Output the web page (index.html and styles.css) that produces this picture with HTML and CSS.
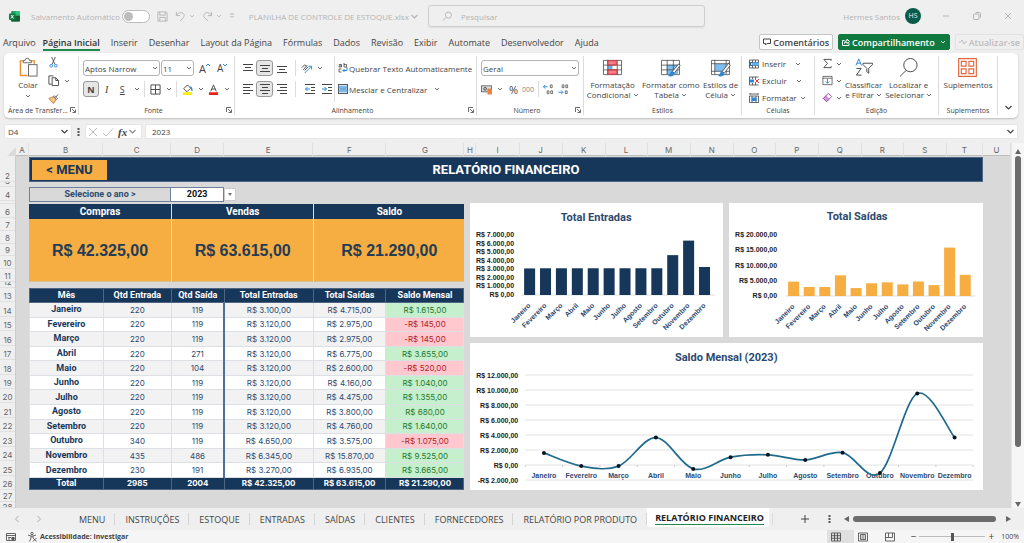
FILE: index.html
```html
<!DOCTYPE html>
<html lang="pt-BR">
<head>
<meta charset="utf-8">
<title>PLANILHA DE CONTROLE DE ESTOQUE.xlsx</title>
<link rel="stylesheet" href="styles.css">
</head>
<body>
<svg class="symbols" aria-hidden="true">
  <symbol id="chev" viewBox="0 0 6 6"><path d="M1 2l2 2 2-2" fill="none" stroke="currentColor" stroke-width=".8"/></symbol>
  <symbol id="launch" viewBox="0 0 6 6"><path d="M.5 5V.5H5M2 2l3 3M5.500 2.500v3h-3" fill="none" stroke="currentColor" stroke-width=".8"/></symbol>
</svg>

<header class="titlebar">
  <div class="title-left">
    <svg class="logo" viewBox="0 0 11 11"><rect x="2" y="0" width="9" height="10.500" rx="1" fill="#21a366"/><path d="M6.500 0H10a1 1 0 0 1 1 1v2.500H6.500z" fill="#33c481"/><path d="M2 5h9v4.500a1 1 0 0 1-1 1H3a1 1 0 0 1-1-1z" fill="#185c37"/><rect y="2.500" width="6.500" height="6.500" rx=".8" fill="#107c41"/><path d="M2 4l2.500 3.500M4.500 4L2 7.500" stroke="#fff" stroke-width=".9"/></svg>
    <label class="autosave">Salvamento Automático <input type="checkbox" class="toggle"></label>
    <button class="tool" aria-label="Salvar"><svg class="i12" viewBox="0 0 12 12"><path d="M1 1h9l1 1v9H1zM3 1v3.500h6V1M3 11V7h6v4" class="line"/></svg></button>
    <button class="tool undo" aria-label="Desfazer"><svg class="i12" viewBox="0 0 12 12"><path d="M1.500 1v4h4M1.700 4.800C3 2.500 5 1.500 7 1.800c3 .5 4 3.500 2 5.700L5.500 11" class="line"/></svg><svg class="chev"><use href="#chev"/></svg></button>
    <button class="tool redo" aria-label="Refazer"><svg class="i12" viewBox="0 0 12 12"><path d="M10.500 1v4h-4M10.300 4.800C9 2.500 7 1.500 5 1.800c-3 .5-4 3.500-2 5.700L6.500 11" class="line"/></svg><svg class="chev"><use href="#chev"/></svg></button>
    <button class="tool" aria-label="Personalizar"><svg class="chev" viewBox="0 0 6 6"><path d="M1 1h4M1.500 3L3 4.500 4.500 3" class="line"/></svg></button>
    <button class="filename">PLANILHA DE CONTROLE DE ESTOQUE.xlsx <svg class="chev big"><use href="#chev"/></svg></button>
  </div>
  <label class="search">
    <svg class="i12" viewBox="0 0 12 12"><circle cx="7" cy="4.500" r="3.300" class="line"/><path d="M4.500 7L1 10.500" class="line"/></svg>
    <input type="search" placeholder="Pesquisar" aria-label="Pesquisar">
  </label>
  <div class="title-right">
    <span>Hermes Santos</span><span class="avatar">HS</span>
    <button class="win" aria-label="Minimizar"><svg class="i8" viewBox="0 0 8 8"><path d="M1 4h6" class="line"/></svg></button>
    <button class="win" aria-label="Restaurar"><svg class="i8" viewBox="0 0 8 8"><rect x=".5" y="2" width="5.500" height="5.500" rx="1" class="line"/><path d="M2.500.5H6.500a1 1 0 0 1 1 1v4" class="line"/></svg></button>
    <button class="win" aria-label="Fechar"><svg class="i8" viewBox="0 0 8 8"><path d="M1 1l6 6M7 1L1 7" class="line"/></svg></button>
  </div>
</header>

<nav class="menubar">
  <button>Arquivo</button><button class="on">Página Inicial</button><button>Inserir</button><button>Desenhar</button><button>Layout da Página</button><button>Fórmulas</button><button>Dados</button><button>Revisão</button><button>Exibir</button><button>Automate</button><button>Desenvolvedor</button><button>Ajuda</button>
  <div class="actions">
    <button class="comments"><svg class="i8" viewBox="0 0 8 8"><path d="M.5 1h7v4.500H4L2.500 7V5.500h-2z" class="line"/></svg>Comentários</button>
    <button class="share"><svg class="i8" viewBox="0 0 8 8"><path d="M2.500 2.500h-2v5h6.500V5M2.500 5.500C2.500 3.500 3.500 2.700 5 2.700V1l2.500 2.500L5 5.500V4c-1.200 0-2 .5-2.500 1.500z" class="line"/></svg>Compartilhamento<svg class="chev"><use href="#chev"/></svg></button>
    <button class="update"><svg class="i8" viewBox="0 0 8 8"><path d="M0 4h1.500L3 2l2 4 1.300-2H8" class="line"/></svg>Atualizar-se</button>
  </div>
</nav>

<section class="ribbon">
  <div class="group clip">
    <div class="body">
      <button class="tall paste"><svg viewBox="0 0 20 20" class="i20"><path d="M5 3H1.500v15.500H9M12 3h4v3" fill="none" stroke="#e8912d" stroke-width="1.500"/><path d="M4.500 2.500h2a2 2 0 0 1 4.500 0h2V5h-8.500z" fill="#fff" stroke="#666"/><rect x="10" y="7" width="9" height="12" fill="#fff" stroke="#666"/></svg>Colar<svg class="chev"><use href="#chev"/></svg></button>
      <div class="stack">
        <button aria-label="Recortar"><svg class="i12" viewBox="0 0 12 12"><path d="M4 0l3.500 8M8 0L4.500 8" stroke="#555" fill="none"/><circle cx="3.500" cy="9.500" r="1.500" fill="none" stroke="#2b88d8"/><circle cx="8.500" cy="9.500" r="1.500" fill="none" stroke="#2b88d8"/></svg></button>
        <button aria-label="Copiar"><svg class="i12" viewBox="0 0 12 12"><path d="M4 10H1V1h5" class="line"/><path d="M4.500 3h4l3 3v5.500h-7zM8.500 3v3h3" class="line"/></svg><svg class="chev"><use href="#chev"/></svg></button>
        <button aria-label="Pincel"><svg class="i12" viewBox="0 0 12 12"><path d="M1 6l5-2 3 3-3 4.500z" fill="#f6c58f" stroke="#d8731a"/><path d="M6 4l3 3 1-1L7 3zM8.500 4.500L11 1.500" stroke="#555" fill="#fff"/></svg></button>
      </div>
    </div>
    <div class="cap"><span>Área de Transfer...</span><svg class="launch"><use href="#launch"/></svg></div>
  </div>

  <div class="group">
    <div class="body rows">
      <div class="row">
        <label class="pick font"><select aria-label="Fonte"><option>Aptos Narrow</option></select><svg class="chev"><use href="#chev"/></svg></label>
        <label class="pick size"><select aria-label="Tamanho"><option>11</option></select><svg class="chev"><use href="#chev"/></svg></label>
        <button class="grow" aria-label="Aumentar fonte">A<svg class="i4" viewBox="0 0 4 4"><path d="M0 3l2-2 2 2" stroke="#2b88d8" fill="none"/></svg></button>
        <button class="grow less" aria-label="Diminuir fonte">A<svg class="i4" viewBox="0 0 4 4"><path d="M0 1l2 2 2-2" stroke="#2b88d8" fill="none"/></svg></button>
      </div>
      <div class="row">
        <button class="sq on bold">N</button><button class="sq serif"><i>I</i></button><button class="sq"><u>S</u></button><svg class="chev"><use href="#chev"/></svg>
        <span class="bar"></span>
        <button class="drop" aria-label="Bordas"><svg class="i12" viewBox="0 0 12 12"><path d="M1 1h10v10H1zM6 1v10M1 6h10" class="line"/></svg><svg class="chev"><use href="#chev"/></svg></button>
        <span class="bar"></span>
        <button class="drop" aria-label="Cor de preenchimento"><svg class="i12" viewBox="0 0 12 12"><rect x="1" y="9" width="10" height="3" fill="#ffee00"/><path d="M2 5l4-4 3.500 3.500L6 8H4.500z" class="line"/><path d="M9 3c2 1 2 2 1.800 4.500" stroke="#2b88d8" stroke-width="1.500" fill="none"/></svg><svg class="chev"><use href="#chev"/></svg></button>
        <button class="drop" aria-label="Cor da fonte"><svg class="i12" viewBox="0 0 12 12"><rect x="1" y="9" width="10" height="3" fill="#e3221b"/><path d="M3 8l3-7 3 7M4 5.500h4" class="line"/></svg><svg class="chev"><use href="#chev"/></svg></button>
      </div>
    </div>
    <div class="cap"><span>Fonte</span><svg class="launch"><use href="#launch"/></svg></div>
  </div>

  <div class="group">
    <div class="body align">
      <div class="rows">
        <div class="row">
          <button class="sq" aria-label="Alinhar em cima"><svg class="i10" viewBox="0 0 10 10"><path d="M0 1.500h10M2 4.500h6M0 7.500h10" class="line"/></svg></button><button class="sq on" aria-label="Alinhar no meio"><svg class="i10" viewBox="0 0 10 10"><path d="M0 2.500h10M2 5.500h6M0 8.500h10" class="line"/></svg></button><button class="sq" aria-label="Alinhar embaixo"><svg class="i10" viewBox="0 0 10 10"><path d="M0 3.500h10M2 6.500h6M0 9.500h10" class="line"/></svg></button>
          <span class="bar"></span>
          <button class="drop" aria-label="Orientação"><svg class="i12" viewBox="0 0 12 12"><path d="M1 5l3-3 2 2M2.500 7.500l4-5M4 8l4-4" class="line"/><path d="M4 11l7-7M8 3.500h3.500V7" stroke="#2b88d8" fill="none"/></svg><svg class="chev"><use href="#chev"/></svg></button>
        </div>
        <div class="row">
          <button class="sq" aria-label="Esquerda"><svg class="i10" viewBox="0 0 10 10"><path d="M0 .5h10M0 3.500h7M0 6.500h10M0 9.500h7" class="line"/></svg></button><button class="sq on" aria-label="Centro"><svg class="i10" viewBox="0 0 10 10"><path d="M0 .5h10M2 3.500h6M0 6.500h10M2 9.500h6" class="line"/></svg></button><button class="sq" aria-label="Direita"><svg class="i10" viewBox="0 0 10 10"><path d="M0 .5h10M3 3.500h7M0 6.500h10M3 9.500h7" class="line"/></svg></button>
          <span class="bar"></span>
          <button class="sq" aria-label="Diminuir recuo"><svg class="i10" viewBox="0 0 10 10"><path d="M0 .5h10M6 3.500h4M6 6.500h4M0 9.500h10" class="line"/><path d="M5 5H.5M2.500 3l-2 2 2 2" stroke="#2b88d8" fill="none"/></svg></button><button class="sq" aria-label="Aumentar recuo"><svg class="i10" viewBox="0 0 10 10"><path d="M0 .5h10M6 3.500h4M6 6.500h4M0 9.500h10" class="line"/><path d="M0 5h4.500M2.500 3l2 2-2 2" stroke="#2b88d8" fill="none"/></svg></button>
        </div>
      </div>
      <span class="bar tallbar"></span>
      <div class="rows wrap">
        <div class="row"><button class="text"><svg class="i10" viewBox="0 0 10 10"><path d="M1 1.500h2.500V4H1V2.800h2.500M6 0v4h2.500V1.500H6M3.500 6H1v3h2.500" class="line thin"/><path d="M9 4v3.500H5M6.500 6L5 7.500 6.500 9" stroke="#2b88d8" fill="none"/></svg>Quebrar Texto Automaticamente</button></div>
        <div class="row"><button class="text"><svg class="i10" viewBox="0 0 10 10"><rect x=".5" y=".5" width="9" height="9" fill="#cfe6f8" stroke="#555"/><path d="M0 3h10M0 7h10" stroke="#2b88d8"/><path d="M1.500 5h7" stroke="#1d6fb8"/></svg>Mesclar e Centralizar<svg class="chev far"><use href="#chev"/></svg></button></div>
      </div>
    </div>
    <div class="cap"><span>Alinhamento</span><svg class="launch"><use href="#launch"/></svg></div>
  </div>

  <div class="group">
    <div class="body rows">
      <div class="row"><label class="pick general"><select aria-label="Formato de número"><option>Geral</option></select><svg class="chev"><use href="#chev"/></svg></label></div>
      <div class="row num">
        <button class="drop" aria-label="Moeda"><svg class="i12" viewBox="0 0 12 12"><rect x=".5" y="2" width="11" height="6.500" fill="#ddd" stroke="#666"/><circle cx="4.500" cy="5.300" r="1.500" class="line"/><rect x="7" y="5" width="5" height="6.500" rx="1" fill="#e8853b"/></svg><svg class="chev"><use href="#chev"/></svg></button>
        <button class="pct">%</button><button class="zeros">000</button><span class="bar"></span>
        <button class="dec" aria-label="Aumentar casas"><svg class="i12" viewBox="0 0 12 12"><path d="M5 3H.5M2.500 1l-2 2 2 2" stroke="#2b88d8" fill="none"/><path d="M8 1h2v3H8zM4.500 7.500h2v3h-2zM8.500 7.500h2v3h-2z" class="line thin"/></svg></button>
        <button class="dec" aria-label="Diminuir casas"><svg class="i12" viewBox="0 0 12 12"><path d="M.5 9H5M3.500 7l2 2-2 2" stroke="#2b88d8" fill="none"/><path d="M4.500 1h2v3h-2zM8.500 1h2v3h-2zM8 7.500h2v3H8z" class="line thin"/></svg></button>
      </div>
    </div>
    <div class="cap"><span>Número</span><svg class="launch"><use href="#launch"/></svg></div>
  </div>

  <div class="group">
    <div class="body big-buttons">
      <button class="tall"><svg class="i20" viewBox="0 0 20 20"><rect x="5" y="3" width="9" height="4.500" fill="#ff8087"/><rect x="5" y="7.500" width="5" height="4.500" fill="#68b1ee"/><rect x="5" y="12" width="10" height="5" fill="#ff8087"/><path d="M.5 2.500h19v15H.5zM5 2v15.500M15 2v15.500M.5 7.500h19M.5 12.500h19" class="line thin"/><path d="M5 3h9v4.500H5zM5 12.500h10V17H5z" stroke="#e0323c" fill="none"/></svg><span>Formatação<br>Condicional <svg class="chev"><use href="#chev"/></svg></span></button>
      <button class="tall"><svg class="i20" viewBox="0 0 20 20"><rect x="6" y="7" width="12" height="10" fill="#7fbdf0"/><path d="M.5 2.500h19v15H.5zM6.500 2v15.500M13 2v15.500M.5 7.500h19M.5 12.500h19" class="line thin"/><path d="M19 6l-7 8 2 2 6-8z" fill="#fff" stroke="#555"/><path d="M12 14c-3 0-2 4-5 5 4 1 7 0 7-3z" fill="#2b88d8"/></svg><span>Formatar como<br>Tabela <svg class="chev"><use href="#chev"/></svg></span></button>
      <button class="tall"><svg class="i20" viewBox="0 0 20 20"><rect x="4" y="6" width="12" height="8" fill="#7fbdf0"/><path d="M.5 2.500h19v15H.5zM4 2v15.500M16 2v15.500M.5 6h19M.5 14h19" class="line thin"/><path d="M19 5l-7 9 2 2 6-8z" fill="#fff" stroke="#555"/><path d="M12 14c-3 0-2 4-5 5 4 1 7 0 7-3z" fill="#2b88d8"/></svg><span>Estilos de<br>Célula <svg class="chev"><use href="#chev"/></svg></span></button>
    </div>
    <div class="cap"><span>Estilos</span></div>
  </div>

  <div class="group">
    <div class="body cells">
      <button class="text"><svg class="i10" viewBox="0 0 10 10"><path d="M.5 1h9v8h-9zM3.500 1v8M6.500 1v8M0 3.500h10M0 6.500h10" class="line thin"/><path d="M3 3.500h7v3H3z" fill="#68b1ee"/><path d="M3.500 3L1 5l2.500 2" stroke="#1d6fb8" fill="none"/></svg>Inserir<svg class="chev far"><use href="#chev"/></svg></button>
      <button class="text"><svg class="i10" viewBox="0 0 10 10"><path d="M.5 1h9M.5 9h9M3.500 1v2M6.500 1v2M3.500 7v2M6.500 7v2M.5 1v8" class="line thin"/><path d="M1 3.500h4v3H1z" fill="#2b88d8"/><path d="M6 3l4 4M10 3L6 7" stroke="#e0323c" fill="none"/></svg>Excluir<svg class="chev far"><use href="#chev"/></svg></button>
      <button class="text"><svg class="i10" viewBox="0 0 10 10"><path d="M.5 3h9v6.500h-9zM3 3v6.500M7 3v6.500M1 1h8M1 0v2M9 0v2" class="line thin"/><path d="M2.500 4.500h5v3.500h-5z" fill="#2b88d8"/></svg>Formatar<svg class="chev"><use href="#chev"/></svg></button>
    </div>
    <div class="cap"><span>Células</span></div>
  </div>

  <div class="group">
    <div class="body edit">
      <div class="cells">
        <button class="text" aria-label="Soma"><svg class="i12" viewBox="0 0 12 12"><path d="M10 3V1.500H2l4 4.500-4 4.500h8V9" class="line"/></svg><svg class="chev"><use href="#chev"/></svg></button>
        <button class="text" aria-label="Preencher"><svg class="i12" viewBox="0 0 12 12"><path d="M1 1.500h10v9H1zM1 3.500h10" class="line thin"/><path d="M6 4v5M4 7l2 2 2-2" stroke="#2b88d8" fill="none"/></svg><svg class="chev"><use href="#chev"/></svg></button>
        <button class="text" aria-label="Limpar"><svg class="i12" viewBox="0 0 12 12"><path d="M1.500 7L7 1.500l3.500 3.500L5 10.500z" fill="#fff" stroke="#a33bb5"/><path d="M1.500 7L4 4.500 7.500 8 5 10.500z" fill="#d9a0e0" stroke="#a33bb5"/></svg><svg class="chev"><use href="#chev"/></svg></button>
      </div>
      <button class="tall"><svg class="i20" viewBox="0 0 20 20"><path d="M2 8l3-7 3 7M3 5.500h4" fill="none" stroke="#2b88d8"/><path d="M2.500 11h5l-5 7h5.500M9.500 5.500h10v1.500l-4 4v5l-2-1.500V11l-4-4z" class="line"/></svg><span>Classificar<br>e Filtrar <svg class="chev"><use href="#chev"/></svg></span></button>
      <button class="tall"><svg class="i20" viewBox="0 0 20 20"><circle cx="12" cy="7.500" r="7" class="line"/><path d="M7.500 13L1 19.500" class="line"/></svg><span>Localizar e<br>Selecionar <svg class="chev"><use href="#chev"/></svg></span></button>
    </div>
    <div class="cap"><span>Edição</span></div>
  </div>

  <div class="group">
    <div class="body big-buttons">
      <button class="tall"><svg class="i20" viewBox="0 0 20 20"><path d="M.7.7h18.600v18.600H.7zM3.500 3.500h5v5h-5zM11.500 3.500h5v5h-5zM3.500 11.500h5v5h-5zM11.500 11.500h5v5h-5z" fill="none" stroke="#e2673f" stroke-width="1.200"/></svg><span>Suplementos</span></button>
    </div>
    <div class="cap"><span>Suplementos</span></div>
  </div>
  <button class="collapse" aria-label="Recolher"><svg class="chev big"><use href="#chev"/></svg></button>
</section>

<section class="formula">
  <label class="box name"><input type="text" value="D4" aria-label="Caixa de nome"><svg class="chev big"><use href="#chev"/></svg></label>
  <svg class="dots" viewBox="0 0 3 8"><path d="M.5 0h2v2h-2zM.5 3h2v2h-2zM.5 6h2v2h-2z" fill="#555"/></svg>
  <div class="box fx"><svg class="i10" viewBox="0 0 10 10"><path d="M1 1l8 8M9 1L1 9" stroke="#bbb" fill="none"/></svg><svg class="i10" viewBox="0 0 10 10"><path d="M0 6l3 3 7-7.500" stroke="#bbb" fill="none"/></svg><i>fx</i><svg class="chev big"><use href="#chev"/></svg></div>
  <label class="box value"><input type="text" value="2023" aria-label="Barra de fórmulas"><svg class="chev big"><use href="#chev"/></svg></label>
</section>

<main class="workbook">
  <div class="corner"><svg viewBox="0 0 9 9"><path d="M9 0v9H0z" fill="#dadada"/></svg></div>
  <div class="colhead"><span>A</span><span>B</span><span>C</span><span>D</span><span>E</span><span>F</span><span>G</span><span>H</span><span>I</span><span>J</span><span>K</span><span>L</span><span>M</span><span>N</span><span>O</span><span>P</span><span>Q</span><span>R</span><span>S</span><span>T</span><span>U</span></div>
  <div class="vscroll"><svg viewBox="0 0 6 5"><path d="M0 5l3-5 3 5z" fill="#666"/></svg><span class="thumb"></span><span class="rest"></span><svg viewBox="0 0 6 5"><path d="M0 0l3 5 3-5z" fill="#666"/></svg></div>
  <div class="rowhead"><span>2</span><span>3</span><span>4</span><span></span><span>6</span><span>7</span><span>8</span><span>9</span><span>10</span><span>11</span><span>12</span><span>13</span><span>14</span><span>15</span><span>16</span><span>17</span><span>18</span><span>19</span><span>20</span><span>21</span><span>22</span><span>23</span><span>24</span><span>25</span><span>26</span><span>27</span><span class="last">28</span></div>

  <div class="canvas">
    <div class="banner"><button>&lt; MENU</button><h1>RELATÓRIO FINANCEIRO</h1><span></span></div>
    <div class="year"><span class="ask">Selecione o ano &gt;</span><span class="cell">2023</span><button aria-label="Escolher ano"><svg viewBox="0 0 4 3"><path d="M0 0h4L2 3z" fill="#777"/></svg></button></div>
    <div class="cards">
      <section><h2>Compras</h2><p>R$ 42.325,00</p></section>
      <section><h2>Vendas</h2><p>R$ 63.615,00</p></section>
      <section><h2>Saldo</h2><p>R$ 21.290,00</p></section>
    </div>
    <div class="tablebox">
    <table>
      <colgroup><col class="c1"><col class="c2"><col class="c3"><col class="c4"><col class="c5"><col class="c6"></colgroup>
      <thead><tr><th>Mês</th><th>Qtd Entrada</th><th>Qtd Saída</th><th>Total Entradas</th><th>Total Saídas</th><th>Saldo Mensal</th></tr></thead>
      <tbody>
        <tr><th>Janeiro</th><td>220</td><td>119</td><td>R$ 3.100,00</td><td>R$ 4.715,00</td><td class="up">R$ 1.615,00</td></tr>
        <tr><th>Fevereiro</th><td>220</td><td>119</td><td>R$ 3.120,00</td><td>R$ 2.975,00</td><td class="down">-R$ 145,00</td></tr>
        <tr><th>Março</th><td>220</td><td>119</td><td>R$ 3.120,00</td><td>R$ 2.975,00</td><td class="down">-R$ 145,00</td></tr>
        <tr><th>Abril</th><td>220</td><td>271</td><td>R$ 3.120,00</td><td>R$ 6.775,00</td><td class="up">R$ 3.655,00</td></tr>
        <tr><th>Maio</th><td>220</td><td>104</td><td>R$ 3.120,00</td><td>R$ 2.600,00</td><td class="down">-R$ 520,00</td></tr>
        <tr><th>Junho</th><td>220</td><td>119</td><td>R$ 3.120,00</td><td>R$ 4.160,00</td><td class="up">R$ 1.040,00</td></tr>
        <tr><th>Julho</th><td>220</td><td>119</td><td>R$ 3.120,00</td><td>R$ 4.475,00</td><td class="up">R$ 1.355,00</td></tr>
        <tr><th>Agosto</th><td>220</td><td>119</td><td>R$ 3.120,00</td><td>R$ 3.800,00</td><td class="up">R$ 680,00</td></tr>
        <tr><th>Setembro</th><td>220</td><td>119</td><td>R$ 3.120,00</td><td>R$ 4.760,00</td><td class="up">R$ 1.640,00</td></tr>
        <tr><th>Outubro</th><td>340</td><td>119</td><td>R$ 4.650,00</td><td>R$ 3.575,00</td><td class="down">-R$ 1.075,00</td></tr>
        <tr><th>Novembro</th><td>435</td><td>486</td><td>R$ 6.345,00</td><td>R$ 15.870,00</td><td class="up">R$ 9.525,00</td></tr>
        <tr><th>Dezembro</th><td>230</td><td>191</td><td>R$ 3.270,00</td><td>R$ 6.935,00</td><td class="up">R$ 3.665,00</td></tr>
      </tbody>
      <tfoot><tr><th>Total</th><td>2985</td><td>2004</td><td>R$ 42.325,00</td><td>R$ 63.615,00</td><td>R$ 21.290,00</td></tr></tfoot>
    </table>
    </div>
    <div class="charts">
      <figure class="chart in"><svg id="entradas" viewBox="0 0 252 134"></svg></figure>
      <figure class="chart out"><svg id="saidas" viewBox="0 0 254 134"></svg></figure>
      <figure class="chart wide"><svg id="saldo" viewBox="0 0 512 147"></svg></figure>
    </div>
  </div>
</main>

<nav class="sheets">
  <button class="nav" aria-label="Anterior"><svg class="i8" viewBox="0 0 8 8"><path d="M5.500 1l-3 3 3 3" class="line"/></svg></button>
  <button class="nav" aria-label="Próxima"><svg class="i8" viewBox="0 0 8 8"><path d="M2.500 1l3 3-3 3" class="line"/></svg></button>
  <button class="tab first">MENU</button><button class="tab">INSTRUÇÕES</button><button class="tab">ESTOQUE</button><button class="tab">ENTRADAS</button><button class="tab">SAÍDAS</button><button class="tab">CLIENTES</button><button class="tab">FORNECEDORES</button><button class="tab long">RELATÓRIO POR PRODUTO</button><button class="tab active"><span>RELATÓRIO FINANCEIRO</span></button>
  <span class="bar"></span>
  <div class="hscroll">
    <button class="nav" aria-label="Nova planilha"><svg class="i8" viewBox="0 0 8 8"><path d="M4 0v8M0 4h8" stroke="#444"/></svg></button>
    <svg class="dots" viewBox="0 0 3 8"><path d="M.5 0h2v2h-2zM.5 3h2v2h-2zM.5 6h2v2h-2z" fill="#555"/></svg>
    <svg class="tri" viewBox="0 0 5 6"><path d="M5 0v6L0 3z" fill="#666"/></svg><span class="thumb"></span><svg class="tri" viewBox="0 0 5 6"><path d="M0 0v6l5-3z" fill="#666"/></svg>
  </div>
</nav>

<footer class="status">
  <svg class="i10" viewBox="0 0 10 10"><path d="M.5 1.500h9v7h-9zM0 3.500h10M2 5.500h3M2 7h2" class="line thin"/><circle cx="7" cy="6.500" r="1.800" fill="#555"/></svg>
  <svg class="i10" viewBox="0 0 10 10"><circle cx="5" cy="1.500" r="1.200" class="line thin"/><path d="M1 3l3 1v2L2.500 9.500M9 3L6 4v2M4 4h2" class="line thin"/><path d="M6 6l3.500 3.500M9.500 6L6 9.500" class="line thin"/></svg>
  <b>Acessibilidade: investigar</b>
  <div class="views">
    <button class="on" aria-label="Normal"><svg class="i10" viewBox="0 0 10 10"><path d="M.5 1h9v8h-9zM3.500 1v8M6.500 1v8M0 3.700h10M0 6.300h10" class="line thin"/></svg></button>
    <button aria-label="Layout da Página"><svg class="i10" viewBox="0 0 10 10"><path d="M.5 1h9v8h-9zM2.500 2.500h5v5h-5zM3.500 4h3M3.500 6h3" class="line thin"/></svg></button>
    <button aria-label="Quebra de Página"><svg class="i10" viewBox="0 0 10 10"><path d="M.5 1h9v8h-9zM3.500 1v4.500h4V1M.5 5.500h3" class="line thin"/></svg></button>
  </div>
  <span class="sign">−</span><input type="range" min="0" max="200" value="100" aria-label="Zoom"><span class="sign">+</span><span class="zoom">100%</span>
</footer>
<script src="charts.js"></script>
</body>
</html>
```
FILE: styles.css
```css
* { box-sizing: border-box; }
body {
  margin: 0; height: 100vh; display: flex; flex-direction: column; overflow: hidden;
  background: #efefef; color: #444; font: 8px/11px "Open Sans", "Noto Sans", sans-serif;
}
button, input, select { font: inherit; color: inherit; background: none; border: 0; padding: 0; margin: 0; outline: 0; }
button { display: flex; align-items: center; white-space: nowrap; }
svg { flex: none; display: block; overflow: visible; }
.symbols { width: 0; height: 0; position: absolute; }
.line { fill: none; stroke: currentColor; }
.thin { stroke-width: .8; }
.chev { width: 6px; height: 6px; }
.chev.big { width: 9px; height: 9px; }
.i4 { width: 4px; height: 4px; }
.i8 { width: 8px; height: 8px; }
.i10 { width: 10px; height: 10px; }
.i12 { width: 11px; height: 11px; }
.i20 { width: 19px; height: 19px; }
.dots { width: 3px; height: 8px; }
.bar { width: 1px; height: 16px; background: #dcdcdc; }

.titlebar { display: grid; grid-template-columns: 428fr 277fr 319fr; height: 32px; align-items: center; color: #b4b4b4; flex: none; }
.title-left { display: flex; align-items: center; padding-left: 9px; gap: 7px; }
.logo { width: 11px; height: 11px; margin-right: 4px; }
.autosave { display: flex; align-items: center; gap: 2px; white-space: nowrap; }
.toggle { appearance: none; width: 28px; height: 13px; border: 1px solid #bbb; border-radius: 7px; background: #fff; padding: 0 1px; display: flex; align-items: center; }
.toggle::before { content: ""; width: 9px; height: 9px; border-radius: 5px; background: #bdbdbd; }
.tool { gap: 3px; }
.filename { margin-left: 7px; gap: 1px; }
.search { display: flex; align-items: center; height: 22px; border: 1px solid #cfcfcf; border-radius: 3px; padding-left: 13px; gap: 8px; box-shadow: 0 1px 1px #ddd; }
.search input { flex: 1; min-width: 0; }
.search input::placeholder { color: #b4b4b4; opacity: 1; }
.title-right { display: flex; align-items: center; justify-content: flex-end; padding-right: 10px; gap: 5px; }
.avatar { width: 16px; height: 16px; border-radius: 8px; background: #0b5a4b; color: #e8f3ef; font-size: 7px; line-height: 16px; text-align: center; }
.win { margin-left: 14px; width: 12px; justify-content: center; }

.menubar { display: flex; gap: 11px; padding-left: 3px; height: 20px; flex: none; font-size: 9px; align-items: center; }
.menubar > button { height: 18px; border-bottom: 2px solid transparent; padding-top: 3px; }
.menubar > .on { font-weight: 600; border-color: #1f8a50; color: #333; }
.menubar > button:first-child { margin-right: -4px; }
.actions { display: flex; margin-left: auto; gap: 5px; }
.actions button { height: 16px; border-radius: 2px; gap: 2px; padding: 0 3px; font-weight: 600; border: 1px solid #c4c4c4; background: #fff; }
.actions .share { background: #10793f; border-color: #10793f; color: #fff; }
.actions .share .chev { margin-left: 3px; }
.actions .update { background: none; border-color: #e2e2e2; color: #bdbdbd; }

.ribbon { display: grid; grid-template-columns: 75fr 156fr 242fr 107fr 158fr 73fr 124fr 59fr 20fr; height: 65px; margin: 1px 6px 0 4px; background: #fff; border-radius: 5px; box-shadow: 0 1px 2px #bbb; flex: none; padding: 3px 0; }
.group { display: flex; flex-direction: column; border-right: 1px solid #dcdcdc; min-width: 0; }
.body { flex: 1; display: flex; min-height: 0; padding: 0 4px; }
.cap { display: flex; align-items: center; height: 10px; font-size: 7px; line-height: 9px; padding: 0 2px; white-space: nowrap; }
.cap span { flex: 1; text-align: center; }
.launch { width: 6px; height: 6px; }
.rows { display: flex; flex-direction: column; gap: 5px; padding-top: 4px; }
.row { display: flex; align-items: center; height: 16px; gap: 4px; }
.tall { flex-direction: column; align-items: center; line-height: 10px; gap: 3px; text-align: center; }
.tall .chev { display: inline-block; }
.paste { width: 40px; padding: 2px 0 0; gap: 3px; }
.stack { display: flex; flex-direction: column; gap: 7px; padding: 1px 0 0; }
.stack button { gap: 5px; height: 11px; }
.pick { display: flex; align-items: center; height: 16px; border: 1px solid #b5b5b5; border-radius: 3px; padding-right: 1px; }
.pick select { appearance: none; flex: 1; min-width: 0; padding-left: 1px; }
.font { width: 77px; } .size { width: 33px; margin-left: -3px; } .general { flex: 1; }
.grow { font-size: 11px; align-items: flex-start; margin-left: 1px; }
.less { font-size: 10px; margin-left: 3px; }
.sq { width: 17px; height: 16px; justify-content: center; border-radius: 3px; border: 1px solid transparent; font-size: 9px; margin-right: -4px; }
.sq + .chev { margin-left: 4px; }
.sq + .bar { margin-left: 5px; }
.sq.on { background: #e6e6e6; border-color: #9a9a9a; }
.sq.bold { font-weight: 700; }
.serif { font-family: "Liberation Serif", serif; font-size: 10px; }
.row .bar { margin-right: 1px; }
.drop { gap: 5px; }
.align { gap: 3px; padding-right: 0; }
.tallbar { height: 46px; }
.text { gap: 3px; }
.wrap .text { gap: 1px; }
.far { margin-left: 6px; }
.num { gap: 4px; }
.num .bar { margin: 0; }
.pct { font-size: 11px; margin-left: 2px; } .zeros { font-size: 7px; color: #888; }
.big-buttons { justify-content: space-around; padding: 2px 1px; }
.cells { display: flex; flex-direction: column; gap: 6px; padding: 2px 7px; }
.cells button { height: 11px; }
.edit { padding: 0; justify-content: space-between; }
.edit .cells { padding-right: 0; }
.edit .tall { padding-top: 2px; }
.edit .tall:last-child { padding-right: 6px; }
.collapse { align-items: flex-end; justify-content: center; padding-bottom: 3px; }

.formula { display: flex; align-items: center; gap: 5px; margin: 6px 6px 4px 4px; height: 15px; flex: none; }
.box { display: flex; align-items: center; background: #fff; height: 15px; border-radius: 2px; padding: 0 2px; border: 1px solid #e6e6e6; }
.box input { flex: 1; min-width: 0; padding-left: 1px; }
.name { width: 68px; }
.fx { gap: 5px; width: 57px; color: #888; }
.fx i { font: italic 700 11px "Liberation Serif", serif; color: #444; margin-right: -4px; }
.value { flex: 1; margin-left: -2px; padding-left: 5px; }

.workbook { flex: 1; min-height: 0; display: grid; grid-template: 13px minmax(0, 1fr) / 16px minmax(0, 1fr) 13px; font-family: Inter, "Liberation Sans", sans-serif; }
.corner { display: flex; justify-content: flex-end; align-items: flex-end; }
.corner svg { width: 9px; height: 9px; }
.colhead { display: grid; grid-template-columns: 13fr 74fr 68fr 53fr 89fr 73fr 78fr 12fr 43fr 43fr 43fr 42fr 43fr 43fr 42fr 43fr 43fr 42fr 43fr 36fr 28fr; border-bottom: 1px solid #bdbdbd; line-height: 14px; text-align: center; color: #666; }
.colhead span { border-right: 1px solid #e0e0e0; min-width: 0; }
.vscroll { grid-row: 1 / 3; grid-column: 3; background: #f6f6f6; display: flex; flex-direction: column; align-items: center; gap: 2px; padding: 6px 0 1px; border-left: 1px solid #e6e6e6; }
.vscroll svg { width: 6px; height: 5px; }
.vscroll .thumb { flex: 294; width: 6px; border-radius: 3px; background: #6c6c6c; }
.vscroll .rest { flex: 52; }
.rowhead { display: grid; grid-template-rows: 182fr 35fr 98fr 21fr 98fr 91fr 91fr 84fr 91fr 91fr 42fr repeat(14, 101fr) 84fr 42fr; text-align: center; color: #666; border-right: 1px solid #ccc; overflow: hidden; line-height: 10px; }
.rowhead span { min-height: 0; overflow: hidden; border-bottom: 1px solid #e0e0e0; display: flex; align-items: flex-end; justify-content: center; }
.rowhead .last { align-items: flex-start; }

.canvas { background: #d9d9d9; display: grid; min-height: 0; grid-template-columns: 13fr 435fr 6fr 512fr 28fr; grid-template-rows: 26fr 5fr 14fr 3fr 78fr 6fr 202fr 18fr; color: #17375a; }
.canvas > * { min-width: 0; min-height: 0; }
.banner { grid-area: 1 / 2 / 2 / 5; margin-top: 1px; background: #17375a; border: 1px solid #4e6684; display: grid; grid-template-columns: 1fr auto 1fr; align-items: center; padding: 0 2px; }
.banner button { width: 75px; height: 20px; justify-content: center; background: #f6ad42; color: #17375a; font: 700 13px Roboto, sans-serif; }
.banner h1 { margin: 0; color: #fff; font: 700 13px Roboto, sans-serif; }
.year { grid-area: 3 / 2; display: grid; grid-template-columns: 142fr 53fr 12fr 228fr; font: 700 9px/13px Roboto, sans-serif; text-align: center; }
.ask { border: 1px solid #6e819a; color: #2c4a70; }
.cell { background: #fff; border: 1px solid #6e819a; border-left: 0; color: #111; }
.year button { background: #fff; border: 1px solid #ccc; justify-content: center; margin: 1px 0; }
.year svg { width: 4px; height: 3px; }
.cards { grid-area: 5 / 2; display: grid; grid-template-columns: 142fr 142fr 151fr; }
.cards section { display: flex; flex-direction: column; background: #f6ad42; border-bottom: 1px solid #d9c08f; }
.cards section + section { border-left: 1px solid #e3dfd6; }
.cards h2 { margin: 0; background: #17375a; color: #fff; font: 700 10px/15px Roboto, sans-serif; text-align: center; }
.cards p { margin: auto; font: 700 16px/20px "Liberation Sans", sans-serif; color: #243c55; padding-top: 2px; }
.tablebox { grid-area: 7 / 2; display: grid; }
table { width: 100%; height: 100%; border-collapse: collapse; table-layout: fixed; text-align: center; line-height: 10px; }
tr { height: calc(100% / 14); }
.c1 { width: calc(100% * 74 / 435); } .c2 { width: calc(100% * 68 / 435); } .c3 { width: calc(100% * 53 / 435); }
.c4 { width: calc(100% * 89 / 435); } .c5 { width: calc(100% * 73 / 435); } .c6 { width: calc(100% * 78 / 435); }
th, td { padding: 0; border: 1px solid #dcdfe3; white-space: nowrap; }
th { font: 700 9px/11px Roboto, sans-serif; }
thead th { line-height: 13px; }
td { color: #2c4a70; }
tbody tr { background: #fff; }
tbody tr:nth-child(odd) { background: #f2f2f2; }
tbody td:nth-child(3) { border-right: 2px solid #4e6f97; }
thead th, tfoot th, tfoot td { background: #17375a; color: #fff; border-color: #4e6684; }
tfoot td { font: 700 8px/11px Inter, sans-serif; }
.up { background: #c6efce; color: #1c7a2b; }
.down { background: #ffc7ce; color: #b01b26; }
.charts { grid-area: 5 / 4 / 8 / 5; display: grid; grid-template: 134fr 147fr / 252fr 254fr; gap: 6px; margin-top: -1px; }
.chart { margin: 0; background: #fff; min-width: 0; min-height: 0; display: grid; }
.chart svg { width: 100%; height: 100%; min-height: 0; }
.wide { grid-column: 1 / 3; }
.chart text { font: 700 7px "Liberation Sans", sans-serif; fill: #2c4a70; }
.chart text.title { font: 700 11px Roboto, sans-serif; text-anchor: middle; }
.chart text.axis { fill: #222; text-anchor: end; }
.chart text.month { text-anchor: middle; }
.chart text.slant { text-anchor: end; }

.sheets { display: flex; align-items: center; height: 22px; flex: none; font-size: 9px; }
.nav { width: 22px; justify-content: center; color: #aaa; }
.nav:first-child { margin-left: 6px; }
.tab { height: 22px; padding: 0 10px; }
.tab:not(.active) { background: linear-gradient(#d5d5d5, #d5d5d5) right center / 1px 12px no-repeat; }
.tab.first { margin-left: 19px; }
.tab.active { background: #fff; font-weight: 700; color: #222; height: 19px; align-self: flex-start; padding: 0 5px 0 8px; border-radius: 0 0 3px 3px; }
.active span { border-bottom: 1px solid #1f8a50; line-height: 13px; }
.sheets > .bar { height: 12px; margin-left: 3px; }
.sheets .hscroll .nav { margin-left: 0; }
.hscroll { display: flex; flex: 1; align-items: center; margin-left: 21px; gap: 4px; padding-right: 13px; }
.hscroll .dots { margin: 0 9px 0 8px; }
.hscroll .thumb { flex: 1; height: 6px; border-radius: 3px; background: #6c6c6c; }
.hscroll .tri { width: 5px; height: 6px; }
.hscroll .tri:last-child { margin-left: 6px; }

.status { display: flex; align-items: center; height: 13px; background: #f5f5f5; flex: none; font-size: 7px; padding: 0 5px 0 6px; gap: 3px; }
.status svg:first-child { margin-right: 8px; }
.views { display: flex; margin-left: auto; }
.views button { width: 27px; height: 13px; justify-content: center; }
.views .on { background: #e0e0e0; }
.sign { font-size: 10px; }
.status input { appearance: none; width: 66px; height: 10px; background: linear-gradient(#bbb, #bbb) center / 100% 1px no-repeat; }
.status input::-webkit-slider-thumb { appearance: none; width: 3px; height: 8px; background: #555; }
.zoom { margin-left: 4px; }
```
FILE: charts.js
```js
const months = ["Janeiro", "Fevereiro", "Março", "Abril", "Maio", "Junho", "Julho", "Agosto", "Setembro", "Outubro", "Novembro", "Dezembro"];
const bought = [3100, 3120, 3120, 3120, 3120, 3120, 3120, 3120, 3120, 4650, 6345, 3270];
const sold = [4715, 2975, 2975, 6775, 2600, 4160, 4475, 3800, 4760, 3575, 15870, 6935];
const money = v => (v < 0 ? "-" : "") + "R$ " + Math.abs(v).toLocaleString("en-US").replace(",", ".") + ",00";
const text = (x, y, cls, s, extra = "") => `<text x="${x}" y="${y}" class="${cls}" ${extra}>${s}</text>`;

function bars(id, o) {
  let out = text(o.titleX, o.titleY, "title", o.title);
  const y = v => o.base - v * (o.base - o.top) / o.max;
  for (let v = 0; v <= o.max; v += o.step) out += text(o.axisX, y(v) + 2, "axis", money(v));
  out += `<path d="M${o.x - 3} ${o.base}H${o.x + 12 * o.pitch}" stroke="#ddd"/>`;
  o.data.forEach((v, i) => {
    const x = o.x + i * o.pitch;
    out += `<rect x="${x}" y="${y(v)}" width="11" height="${o.base - y(v)}" fill="${o.color}"/>`;
    out += text(0, 0, "slant", months[i], `transform="translate(${x + 7} ${o.base + 11}) rotate(-45)"`);
  });
  document.getElementById(id).innerHTML = out;
}

bars("entradas", { title: "Total Entradas", titleX: 126, titleY: 18, data: bought, max: 7000, step: 1000, base: 92, top: 32, axisX: 44, x: 54, pitch: 15.9, color: "#17375a" });
bars("saidas", { title: "Total Saídas", titleX: 128, titleY: 17, data: sold, max: 20000, step: 5000, base: 93, top: 32, axisX: 48, x: 59, pitch: 15.6, color: "#f6ad42" });

const left = 55, right = 503, zero = 122, scale = 0.0075;
let line = text(256, 18, "title", "Saldo Mensal (2023)");
for (let v = -2000; v <= 12000; v += 2000) {
  const y = zero - v * scale;
  line += `<path d="M${left} ${y}H${right}" stroke="#e2e2e2"/>` + text(48, y + 3, "axis", money(v));
}
const pitch = (right - left) / 12;
const pts = bought.map((b, i) => [left + pitch * (i + 0.5), zero - (sold[i] - b) * scale]);
let d = `M${pts[0]}`;
for (let i = 0; i < 11; i++) {
  const a = pts[Math.max(i - 1, 0)], b = pts[i], c = pts[i + 1], e = pts[Math.min(i + 2, 11)];
  d += `C${b[0] + (c[0] - a[0]) / 6} ${b[1] + (c[1] - a[1]) / 6} ${c[0] - (e[0] - b[0]) / 6} ${c[1] - (e[1] - b[1]) / 6} ${c[0]} ${c[1]}`;
}
for (let i = 0; i <= 12; i++) line += `<path d="M${left + pitch * i} ${zero}v2" stroke="#ccc"/>`;
months.forEach((m, i) => { line += text(pts[i][0], zero + 13, "month", m); });
line += `<path d="${d}" fill="none" stroke="#1f6a8c" stroke-width="1.7"/>`;
pts.forEach(p => { line += `<circle cx="${p[0]}" cy="${p[1]}" r="2" fill="#0a1420"/>`; });
document.getElementById("saldo").innerHTML = line;
```
